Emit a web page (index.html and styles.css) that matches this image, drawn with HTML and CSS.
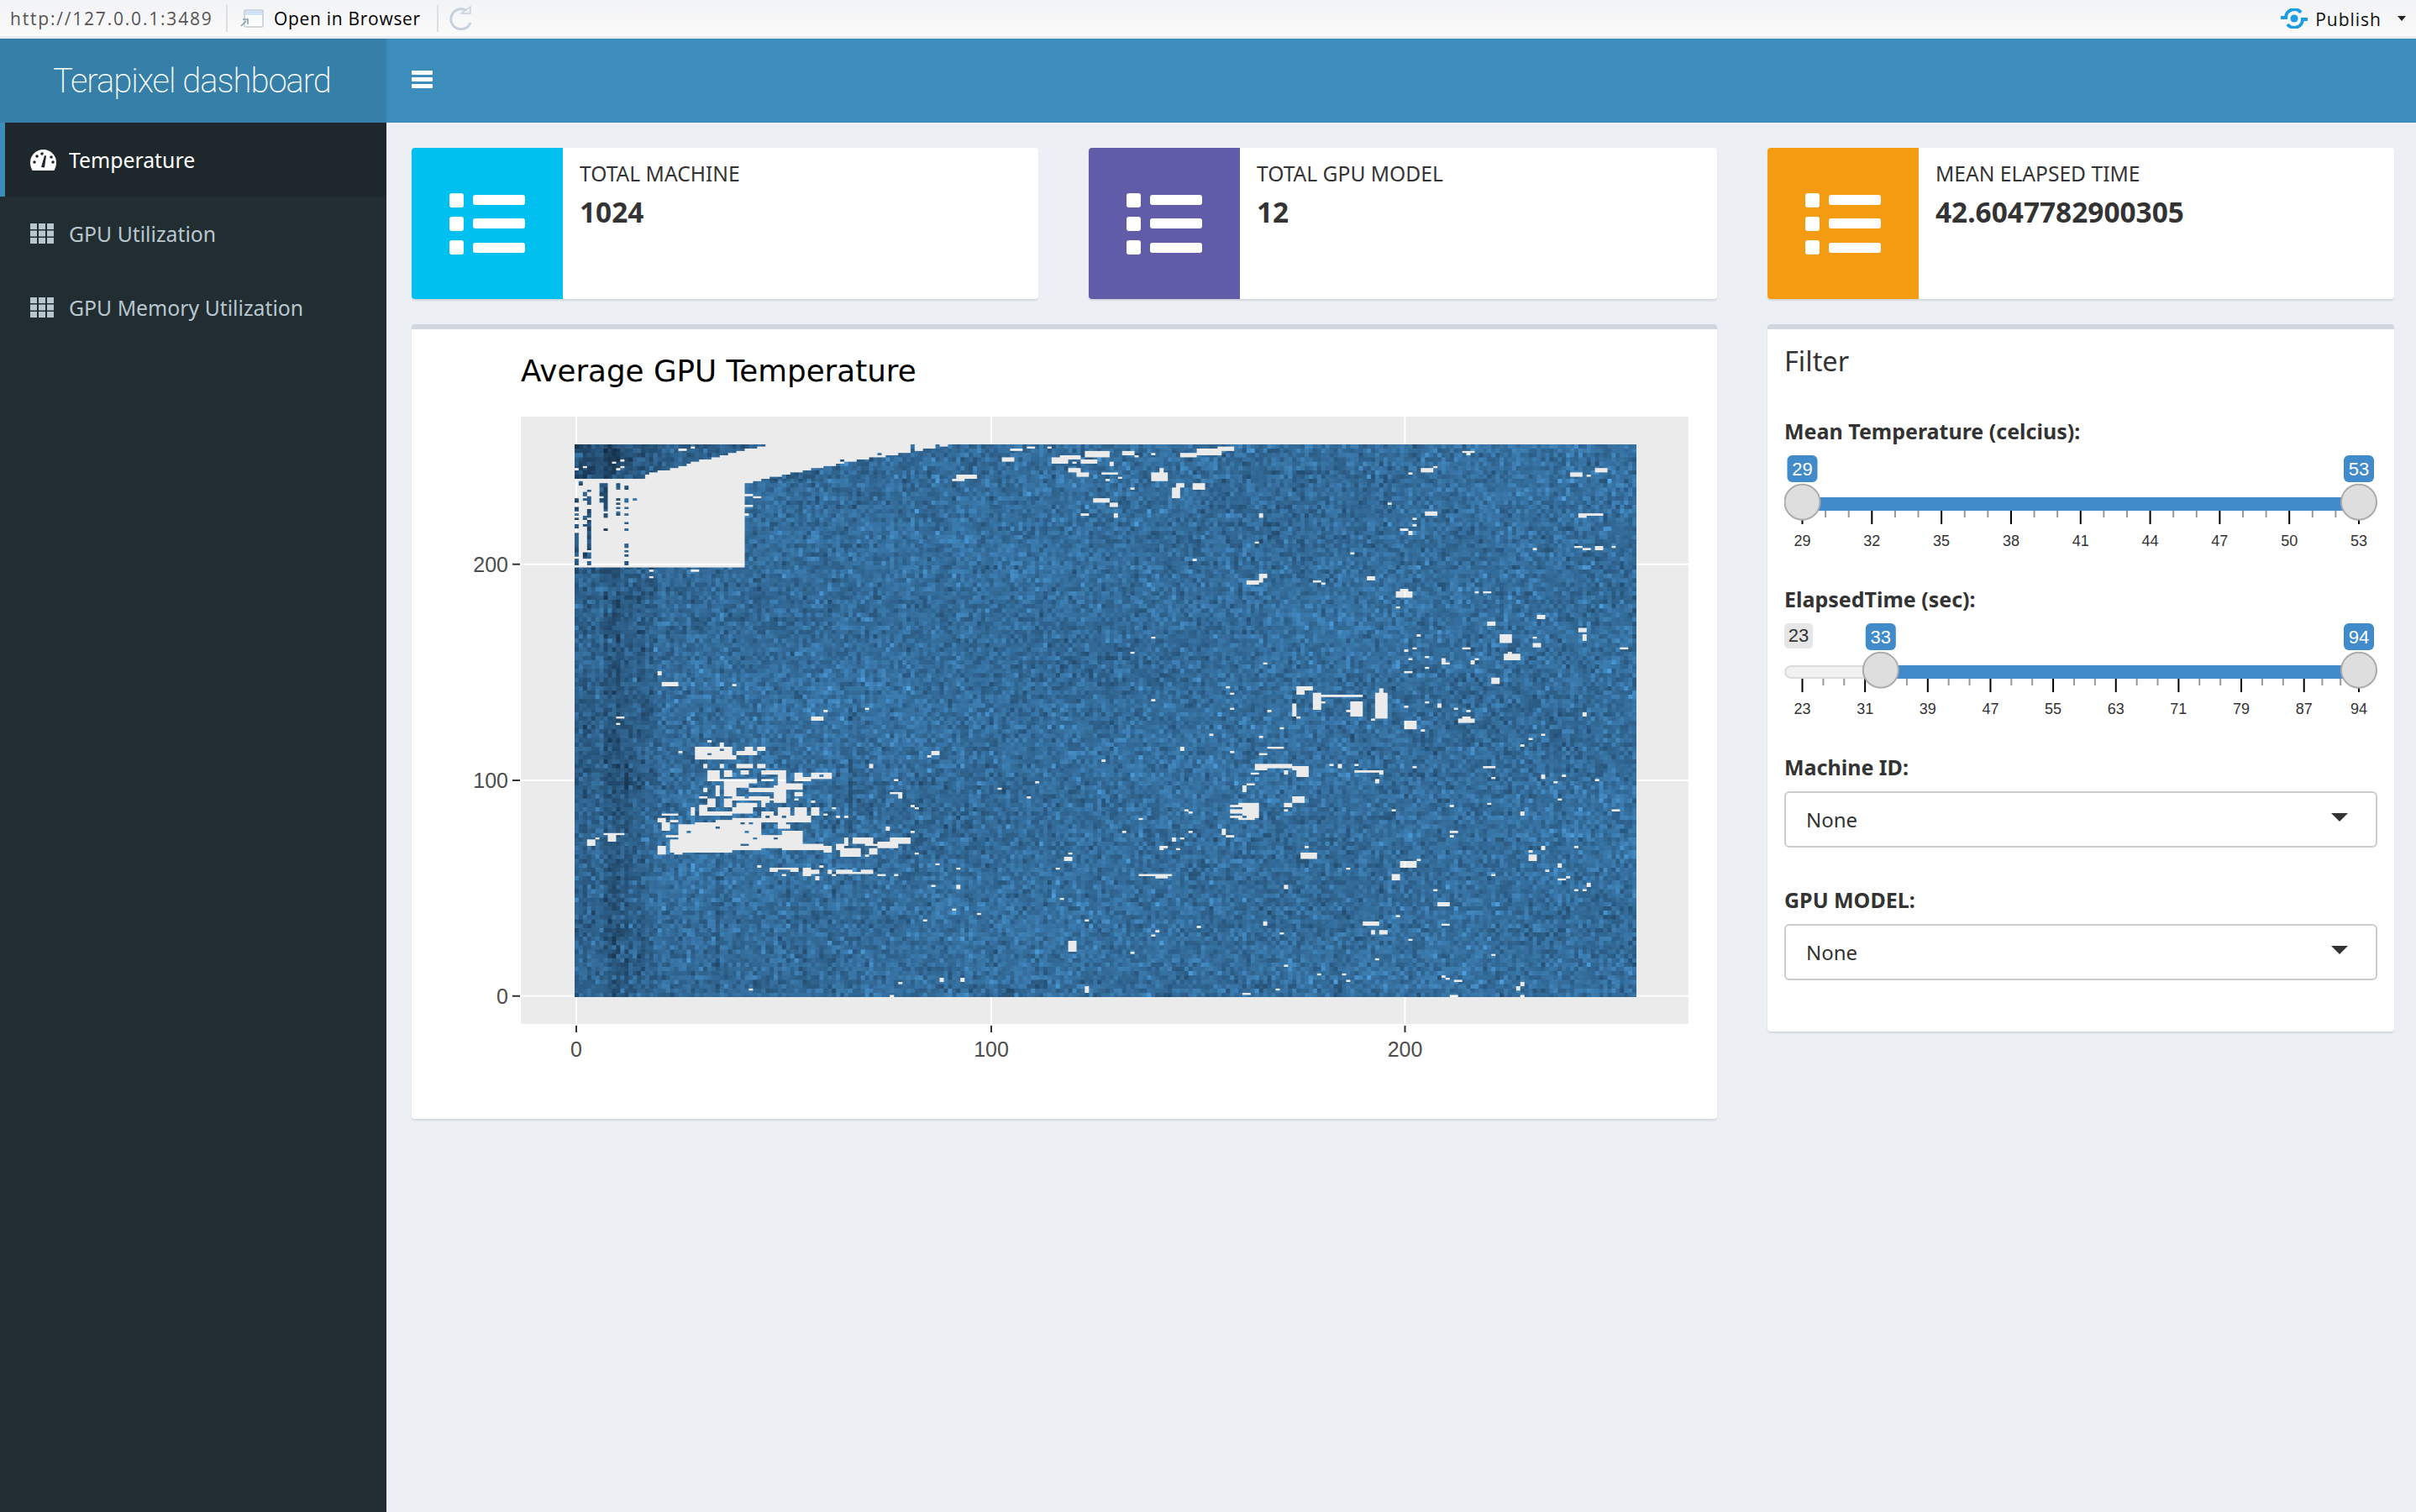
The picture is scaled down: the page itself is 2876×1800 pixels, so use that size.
FILE: index.html
```html
<!DOCTYPE html>
<html lang="en">
  <head>
    <meta charset="UTF-8" />
    <title>Terapixel dashboard</title>
    <link rel="stylesheet" href="styles.css">
  </head>
  <body>
    <div class="topbar">
      <span class="url">http://127.0.0.1:3489</span>
      <span class="divider"></span>
      <svg class="open-icon" viewBox="0 0 30 22">
        <rect x="7" y="1" width="22" height="20" rx="1" fill="#fbfcfd" stroke="#a8b4c2" />
        <rect x="8" y="2" width="20" height="5" fill="#cfe2f6" />
        <path d="M3 20l6-6M5 12h6v6" fill="none" stroke="#8c9cae" stroke-width="1.6" />
      </svg>
      <span class="open-text">Open in Browser</span>
      <span class="divider"></span>
      <svg class="reload-icon" viewBox="0 0 30 30">
        <path d="M24 8A12 12 0 1 0 26 20" fill="none" stroke="#c4d2df" stroke-width="3" />
        <path d="M15 9h11V1z" fill="#eef2f6" stroke="#c4d2df" stroke-width="1.4" />
      </svg>
      <span class="publish">
        <svg class="publish-icon" viewBox="0 0 32 24">
          <path d="M0 11H6A10 10 0 0 1 24 5" fill="none" stroke="#1b9ce4" stroke-width="4" />
          <path d="M32 13H26A10 10 0 0 1 8 19" fill="none" stroke="#1b9ce4" stroke-width="4" />
          <circle cx="16" cy="12" r="4.6" fill="#1b9ce4" />
        </svg>
        <span class="publish-text">Publish</span>
        <span class="publish-caret"></span>
      </span>
    </div>

    <div class="app">
      <aside class="sidebar">
        <div class="logo">Terapixel dashboard</div>
        <ul class="menu">
          <li class="menu-item active">
            <svg class="menu-icon" viewBox="0 0 31 25">
              <path d="M15.5 0A15.5 15.5 0 0 0 0 15.5c0 3.6 1 6.7 2.600 9.500h25.800c1.600-2.800 2.600-5.900 2.600-9.500A15.500 15.500 0 0 0 15.500 0z" fill="#fff" />
              <g fill="#1e282c">
                <circle cx="5" cy="15" r="1.800" />
                <circle cx="8" cy="8" r="1.800" />
                <circle cx="14" cy="5" r="1.800" />
                <circle cx="25" cy="9" r="1.800" />
                <circle cx="27" cy="15" r="1.800" />
                <path d="M13 21l4-14 2 .5-2 14z" />
              </g>
            </svg>
            <span>Temperature</span>
          </li>
          <li class="menu-item">
            <svg class="menu-icon th" viewBox="0 0 28 24">
              <path d="M0 0h8v7H0zM10 0h8v7h-8zM20 0h8v7h-8zM0 8.500h8v7H0zM10 8.500h8v7h-8zM20 8.500h8v7h-8zM0 17h8v7H0zM10 17h8v7h-8zM20 17h8v7h-8z" fill="#b8c7ce" />
            </svg>
            <span>GPU Utilization</span>
          </li>
          <li class="menu-item">
            <svg class="menu-icon th" viewBox="0 0 28 24">
              <path d="M0 0h8v7H0zM10 0h8v7h-8zM20 0h8v7h-8zM0 8.500h8v7H0zM10 8.500h8v7h-8zM20 8.500h8v7h-8zM0 17h8v7H0zM10 17h8v7h-8zM20 17h8v7h-8z" fill="#b8c7ce" />
            </svg>
            <span>GPU Memory Utilization</span>
          </li>
        </ul>
      </aside>

      <div class="page">
        <header class="navbar">
          <div class="burger"><span></span><span></span><span></span></div>
        </header>

        <main class="content">
          <div class="info-box">
            <div class="info-icon aqua">
              <svg class="list-icon" viewBox="0 0 90 73">
                <path d="M3 0h11a3 3 0 0 1 3 3v11a3 3 0 0 1-3 3H3a3 3 0 0 1-3-3V3a3 3 0 0 1 3-3zM3 28h11a3 3 0 0 1 3 3v11a3 3 0 0 1-3 3H3a3 3 0 0 1-3-3V31a3 3 0 0 1 3-3zM3 56h11a3 3 0 0 1 3 3v11a3 3 0 0 1-3 3H3a3 3 0 0 1-3-3V59a3 3 0 0 1 3-3z" fill="#fff" />
                <path d="M31 2h56a3 3 0 0 1 3 3v6a3 3 0 0 1-3 3H31a3 3 0 0 1-3-3V5a3 3 0 0 1 3-3zM31 30h56a3 3 0 0 1 3 3v6a3 3 0 0 1-3 3H31a3 3 0 0 1-3-3v-6a3 3 0 0 1 3-3zM31 59h56a3 3 0 0 1 3 3v6a3 3 0 0 1-3 3H31a3 3 0 0 1-3-3v-6a3 3 0 0 1 3-3z" fill="#fff" />
              </svg>
            </div>
            <div class="info-text">
              <div class="info-label">TOTAL MACHINE</div>
              <div class="info-value">1024</div>
            </div>
          </div>

          <div class="info-box">
            <div class="info-icon purple">
              <svg class="list-icon" viewBox="0 0 90 73">
                <path d="M3 0h11a3 3 0 0 1 3 3v11a3 3 0 0 1-3 3H3a3 3 0 0 1-3-3V3a3 3 0 0 1 3-3zM3 28h11a3 3 0 0 1 3 3v11a3 3 0 0 1-3 3H3a3 3 0 0 1-3-3V31a3 3 0 0 1 3-3zM3 56h11a3 3 0 0 1 3 3v11a3 3 0 0 1-3 3H3a3 3 0 0 1-3-3V59a3 3 0 0 1 3-3z" fill="#fff" />
                <path d="M31 2h56a3 3 0 0 1 3 3v6a3 3 0 0 1-3 3H31a3 3 0 0 1-3-3V5a3 3 0 0 1 3-3zM31 30h56a3 3 0 0 1 3 3v6a3 3 0 0 1-3 3H31a3 3 0 0 1-3-3v-6a3 3 0 0 1 3-3zM31 59h56a3 3 0 0 1 3 3v6a3 3 0 0 1-3 3H31a3 3 0 0 1-3-3v-6a3 3 0 0 1 3-3z" fill="#fff" />
              </svg>
            </div>
            <div class="info-text">
              <div class="info-label">TOTAL GPU MODEL</div>
              <div class="info-value">12</div>
            </div>
          </div>

          <div class="info-box">
            <div class="info-icon orange">
              <svg class="list-icon" viewBox="0 0 90 73">
                <path d="M3 0h11a3 3 0 0 1 3 3v11a3 3 0 0 1-3 3H3a3 3 0 0 1-3-3V3a3 3 0 0 1 3-3zM3 28h11a3 3 0 0 1 3 3v11a3 3 0 0 1-3 3H3a3 3 0 0 1-3-3V31a3 3 0 0 1 3-3zM3 56h11a3 3 0 0 1 3 3v11a3 3 0 0 1-3 3H3a3 3 0 0 1-3-3V59a3 3 0 0 1 3-3z" fill="#fff" />
                <path d="M31 2h56a3 3 0 0 1 3 3v6a3 3 0 0 1-3 3H31a3 3 0 0 1-3-3V5a3 3 0 0 1 3-3zM31 30h56a3 3 0 0 1 3 3v6a3 3 0 0 1-3 3H31a3 3 0 0 1-3-3v-6a3 3 0 0 1 3-3zM31 59h56a3 3 0 0 1 3 3v6a3 3 0 0 1-3 3H31a3 3 0 0 1-3-3v-6a3 3 0 0 1 3-3z" fill="#fff" />
              </svg>
            </div>
            <div class="info-text">
              <div class="info-label">MEAN ELAPSED TIME</div>
              <div class="info-value">42.6047782900305</div>
            </div>
          </div>

          <section class="box plot-box">
            <svg class="plot-axes" width="1553" height="938">
              <text class="plot-title" x="130" y="62">Average GPU Temperature</text>
              <rect x="130" y="104" width="1390" height="723" fill="#ebebeb" />
              <path d="M196 104v723M690 104v723M1182.500 104v723M130 279.700h1390M130 537h1390M130 793.700h1390" stroke="#fff" stroke-width="2" />
              <path d="M196 829v8M690 829v8M1182.500 829v8M120 279.700h9M120 537h9M120 793.700h9" stroke="#333" stroke-width="2" />
              <g class="axis-y">
                <text x="115" y="288.700">200</text>
                <text x="115" y="546">100</text>
                <text x="115" y="802.700">0</text>
              </g>
              <g class="axis-x">
                <text x="196" y="866">0</text>
                <text x="690" y="866">100</text>
                <text x="1182.500" y="866">200</text>
              </g>
            </svg>
            <canvas id="heatmap" class="heatmap" width="1024" height="1024"></canvas>
          </section>

          <section class="box filter-box">
            <h3 class="filter-title">Filter</h3>
            <label class="field-label">Mean Temperature (celcius):</label>
            <div class="slider" id="tempSlider"></div>
            <label class="field-label">ElapsedTime (sec):</label>
            <div class="slider" id="timeSlider"></div>
            <label class="field-label">Machine ID:</label>
            <div class="select"><span>None</span><span class="select-caret"></span></div>
            <label class="field-label second">GPU MODEL:</label>
            <div class="select"><span>None</span><span class="select-caret"></span></div>
          </section>
        </main>
      </div>
    </div>

    <script src="app.js"></script>
  </body>
</html>
```

FILE: styles.css
```css
* {
  box-sizing: border-box;
}

body {
  margin: 0;
  width: 2876px;
  height: 1800px;
  overflow: hidden;
  background-color: #ecf0f5;
  color: #333;
  font-family: "Noto Sans", sans-serif;
}

/* viewer toolbar */
.topbar {
  display: flex;
  align-items: center;
  height: 46px;
  padding: 0 12px;
  background: linear-gradient(#f2f3f5, #fbfbfb);
  border-bottom: 3px solid #e9ebee;
  font-family: "Open Sans", sans-serif;
  font-size: 21px;
}

.url {
  width: 257px;
  color: #555;
  letter-spacing: 1.8px;
}

.divider {
  width: 2px;
  height: 32px;
  background-color: #dcdfe3;
}

.open-icon {
  width: 30px;
  height: 22px;
  margin-left: 13px;
}

.open-text {
  width: 194px;
  margin-left: 12px;
  color: #000;
  letter-spacing: 0.7px;
}

.reload-icon {
  width: 30px;
  height: 30px;
  margin-left: 12px;
}

.publish {
  display: flex;
  align-items: center;
  margin-left: auto;
}

.publish-icon {
  width: 32px;
  height: 24px;
}

.publish-text {
  margin-left: 9px;
  margin-top: 2px;
  color: #111;
  letter-spacing: 1px;
}

.publish-caret {
  width: 0;
  height: 0;
  margin-left: 19px;
  border-left: 5px solid transparent;
  border-right: 5px solid transparent;
  border-top: 6px solid #222;
}

.app {
  display: flex;
  height: 1754px;
}

/* left menu */
.sidebar {
  width: 460px;
  background-color: #222d32;
}

.logo {
  height: 100px;
  padding-left: 63px;
  background-color: #367fa9;
  color: #fff;
  font-family: Roboto, sans-serif;
  font-size: 40px;
  font-weight: 200;
  line-height: 102px;
  letter-spacing: -1px;
}

.menu {
  list-style: none;
  margin: 0;
  padding: 0;
}

.menu-item {
  display: flex;
  align-items: center;
  height: 88px;
  padding-left: 36px;
  color: #b8c7ce;
  font-size: 24.8px;
}

.menu-item.active {
  padding-left: 30px;
  border-left: 6px solid #3c8dbc;
  background-color: #1e282c;
  color: #fff;
}

.menu-icon {
  width: 31px;
  height: 25px;
  margin-right: 15px;
}

.menu-icon.th {
  width: 28px;
  height: 24px;
  margin-right: 18px;
}

.page {
  flex: 1;
}

.navbar {
  display: flex;
  align-items: center;
  height: 100px;
  padding-left: 30px;
  background-color: #3c8dbc;
}

.burger {
  display: flex;
  flex-direction: column;
  gap: 3px;
  margin-top: -4px;
}

.burger span {
  display: block;
  width: 25px;
  height: 5px;
  border-radius: 1px;
  background-color: #fff;
}

/* main grid */
.content {
  display: grid;
  grid-template-columns: 746px 748px 746px;
  column-gap: 60px;
  row-gap: 30px;
  align-items: start;
  padding: 30px 26px 0 30px;
}

.info-box {
  display: flex;
  height: 180px;
  background-color: #fff;
  border-radius: 4px;
  box-shadow: 0 2px 2px rgba(0, 0, 0, 0.1);
}

.info-icon {
  display: flex;
  align-items: center;
  justify-content: center;
  width: 180px;
  border-radius: 4px 0 0 4px;
}

.info-icon.aqua {
  background-color: #00c0ef;
}

.info-icon.purple {
  background-color: #605ca8;
}

.info-icon.orange {
  background-color: #f39c12;
}

.list-icon {
  width: 90px;
  height: 73px;
}

.info-text {
  padding: 14px 20px;
}

.info-label {
  font-size: 24.6px;
  line-height: 34px;
}

.info-value {
  margin-top: 9px;
  font-size: 33.4px;
  font-weight: 700;
  line-height: 38px;
}

.box {
  position: relative;
  background-color: #fff;
  border-top: 6px solid #d2d6de;
  border-radius: 4px;
  box-shadow: 0 2px 2px rgba(0, 0, 0, 0.1);
}

/* plot */
.plot-box {
  grid-column: span 2;
  height: 946px;
}

.plot-axes {
  display: block;
}

.plot-title {
  font-family: "DejaVu Sans", sans-serif;
  font-size: 35.7px;
  fill: #000;
}

.axis-y text,
.axis-x text {
  font-family: "Liberation Sans", sans-serif;
  font-size: 25px;
  fill: #4d4d4d;
}

.axis-y text {
  text-anchor: end;
}

.axis-x text {
  text-anchor: middle;
}

.heatmap {
  position: absolute;
  left: 193.5px;
  top: 137px;
  width: 1264px;
  height: 658px;
}

/* filter panel */
.filter-box {
  height: 842px;
  padding: 21px 20px 0 20px;
}

.filter-title {
  margin: 0 0 49px 0;
  font-size: 32.5px;
  font-weight: 400;
  line-height: 34px;
}

.field-label {
  display: block;
  font-size: 25px;
  font-weight: 700;
  line-height: 34px;
}

.field-label.second {
  margin-top: 45px;
}

.slider {
  height: 130px;
  margin: 10px 0 26px 0;
}

.slider svg {
  display: block;
}

.slider .tip {
  font-family: "Liberation Sans", sans-serif;
  font-size: 22px;
  text-anchor: middle;
  fill: #fff;
}

.slider .tip.off {
  fill: #333;
}

.slider .grid-text {
  font-family: "Liberation Sans", sans-serif;
  font-size: 18px;
  text-anchor: middle;
  fill: #333;
}

.select {
  display: flex;
  align-items: center;
  justify-content: space-between;
  height: 67px;
  margin-top: 12px;
  padding: 0 33px 0 24px;
  border: 2px solid #ccc;
  border-radius: 6px;
  font-size: 24px;
}

.select-caret {
  width: 0;
  height: 0;
  margin-top: -6px;
  border-left: 10px solid transparent;
  border-right: 10px solid transparent;
  border-top: 10px solid #333;
}
```

FILE: app.js
```js
// Sliders, drawn as svg from their range
const SLIDER_WIDTH = 706;
const SLIDER_LEFT = 21.5;
const SLIDER_SPAN = 662.5;

function buildSlider(id, slider) {
  const pos = (v) => SLIDER_LEFT + ((v - slider.min) / (slider.max - slider.min)) * SLIDER_SPAN;
  const from = pos(slider.from);
  const to = pos(slider.to);
  let html = `<rect x="1" y="53" width="${SLIDER_WIDTH - 2}" height="14" rx="7" fill="#f0f0f0" stroke="#ddd" stroke-width="2" />`;

  slider.marks.forEach((mark, i) => {
    const x = pos(mark);
    html += `<rect x="${x - 1}" y="68" width="2" height="16" fill="#000" />`;
    html += `<text class="grid-text" x="${x}" y="110">${mark}</text>`;
    if (i < slider.marks.length - 1) {
      const step = (pos(slider.marks[i + 1]) - x) / 3;
      html += `<rect x="${x + step - 1}" y="68" width="2" height="8" fill="#999" />`;
      html += `<rect x="${x + 2 * step - 1}" y="68" width="2" height="8" fill="#999" />`;
    }
  });

  html += `<rect x="${from}" y="52" width="${to - from}" height="16" fill="#428bca" />`;
  [from, to].forEach((x) => {
    html += `<ellipse cx="${x}" cy="57.700" rx="21" ry="21" fill="#dedede" stroke="#ababab" stroke-width="2" />`;
  });

  if (slider.from > slider.min) {
    html += `<rect x="0" y="2" width="34" height="30" rx="5" fill="#e6e6e6" />`;
    html += `<text class="tip off" x="17" y="24">${slider.min}</text>`;
  }
  [[from, slider.from], [to, slider.to]].forEach(([x, value]) => {
    html += `<rect x="${x - 18}" y="2" width="36" height="32" rx="6" fill="#428bca" />`;
    html += `<text class="tip" x="${x}" y="26">${value}</text>`;
  });

  document.getElementById(id).innerHTML = `<svg width="${SLIDER_WIDTH}" height="130">${html}</svg>`;
}

buildSlider("tempSlider", {
  min: 29, max: 53, from: 29, to: 53,
  marks: [29, 32, 35, 38, 41, 44, 47, 50, 53],
});

buildSlider("timeSlider", {
  min: 23, max: 94, from: 33, to: 94,
  marks: [23, 31, 39, 47, 55, 63, 71, 79, 87, 94],
});

// Heatmap: 256 x 256 tiles, empty tiles stay transparent
const TILE_W = 1264 / 256;
const TILE_H = 658 / 256;
const MAP_X = 683.5;
const MAP_Y = 529;
const empty = new Uint8Array(256 * 256);

function mulberry(seed) {
  return function () {
    seed = (seed + 0x6d2b79f5) | 0;
    let t = Math.imul(seed ^ (seed >>> 15), 1 | seed);
    t = (t + Math.imul(t ^ (t >>> 7), 61 | t)) ^ t;
    return ((t ^ (t >>> 14)) >>> 0) / 4294967296;
  };
}

// Spots are [x1, y1, x2, y2] in a region scaled by sx, sy from page point ox, oy
function setSpots(region, value) {
  region.spots.forEach(([x1, y1, x2, y2]) => {
    const c1 = Math.round((region.ox + x1 / region.sx - MAP_X) / TILE_W);
    const c2 = Math.round((region.ox + x2 / region.sx - MAP_X) / TILE_W);
    const r1 = Math.round((region.oy + y1 / region.sy - MAP_Y) / TILE_H);
    const r2 = Math.round((region.oy + y2 / region.sy - MAP_Y) / TILE_H);
    for (let r = r1; r < Math.max(r2, r1 + 1); r++) {
      for (let c = c1; c < Math.max(c2, c1 + 1); c++) {
        if (r >= 0 && r < 256 && c >= 0 && c < 256) empty[r * 256 + c] = value;
      }
    }
  });
}

function inPolygon(points, x, y) {
  let inside = false;
  for (let i = 0, j = points.length - 1; i < points.length; j = i++) {
    const [xi, yi] = points[i];
    const [xj, yj] = points[j];
    if (yi > y !== yj > y && x < ((xj - xi) * (y - yi)) / (yj - yi) + xi) inside = !inside;
  }
  return inside;
}

// The large empty area at the top left
const topLeft = [
  [0, 138], [250, 138], [255, 120], [340, 100], [450, 70], [600, 35], [697, 12], [1350, 12],
  [1200, 40], [1010, 70], [850, 100], [730, 125], [607, 155], [607, 448], [0, 448],
];
for (let r = 0; r < 256; r++) {
  for (let c = 0; c < 256; c++) {
    const x = (MAP_X + (c + 0.5) * TILE_W - 683) * 3;
    const y = (MAP_Y + (r + 0.5) * TILE_H - 525) * 3;
    if (inPolygon(topLeft, x, y)) empty[r * 256 + c] = 1;
  }
}

setSpots({ ox: 683, oy: 525, sx: 3, sy: 3, spots: [
  [372, 30, 402, 36], [415, 18, 435, 30], [132, 72, 150, 84], [162, 66, 182, 72], [30, 90, 42, 96],
  [0, 96, 12, 102], [150, 96, 162, 102], [162, 90, 182, 96], [262, 460, 284, 468], [264, 480, 284, 492],
  [415, 460, 445, 468], [1362, 120, 1435, 135], [1350, 135, 1395, 145], [1530, 60, 1545, 66],
  [610, 190, 635, 196], [640, 196, 665, 206], [605, 225, 635, 232], [605, 255, 625, 262],
  [595, 383, 607, 388], [595, 413, 607, 418],
] }, 1);

// Tiles that do hold a value inside the empty area
setSpots({ ox: 683, oy: 525, sx: 3, sy: 3, spots: [
  [12, 144, 30, 156], [90, 150, 120, 195], [90, 208, 120, 222], [102, 195, 120, 250], [102, 258, 120, 276],
  [102, 312, 120, 318], [150, 150, 162, 172], [150, 204, 162, 210], [150, 222, 162, 228], [150, 234, 162, 246],
  [150, 252, 162, 264], [180, 156, 192, 172], [180, 204, 192, 222], [180, 234, 192, 246], [180, 258, 192, 264],
  [180, 288, 192, 300], [180, 312, 192, 318], [180, 366, 192, 384], [180, 390, 192, 396], [180, 408, 192, 414],
  [180, 426, 192, 444], [210, 204, 222, 210], [30, 180, 42, 198], [42, 174, 60, 180], [42, 198, 60, 228],
  [30, 204, 42, 210], [42, 246, 60, 276], [30, 264, 42, 282], [42, 282, 60, 388], [30, 300, 42, 306],
  [30, 396, 60, 420], [42, 426, 60, 444], [0, 204, 12, 222], [0, 234, 12, 252], [0, 258, 12, 264],
  [0, 276, 12, 282], [0, 300, 12, 312], [0, 330, 12, 414], [0, 420, 12, 444], [1205, 15, 1215, 35],
  [1290, 12, 1305, 18], [950, 65, 962, 70], [980, 70, 992, 84], [850, 95, 860, 100], [1080, 40, 1100, 46],
] }, 0);

setSpots({ ox: 1180, oy: 525, sx: 2.01, sy: 3, spots: [
  [82, 18, 105, 30], [132, 18, 145, 30], [42, 28, 75, 35], [25, 60, 55, 72], [145, 62, 185, 82], [165, 50, 210, 65],
  [225, 35, 280, 60], [185, 95, 215, 115], [205, 115, 230, 125], [315, 35, 345, 48], [340, 48, 352, 60],
  [380, 40, 392, 48], [260, 115, 300, 122], [300, 125, 312, 138], [275, 135, 285, 145], [280, 75, 290, 88],
  [190, 70, 205, 85], [215, 65, 250, 80], [380, 112, 420, 142], [400, 100, 410, 112], [450, 45, 490, 60],
  [490, 30, 550, 47], [545, 18, 578, 32], [480, 152, 510, 172], [430, 165, 450, 202], [445, 150, 460, 165],
  [245, 205, 280, 220], [280, 220, 300, 232], [210, 258, 232, 264], [292, 262, 300, 275], [640, 262, 650, 275],
  [630, 360, 638, 368], [480, 420, 490, 425], [860, 395, 866, 408], [1125, 32, 1155, 42], [1135, 42, 1145, 48],
  [1025, 100, 1055, 114], [995, 112, 1008, 120], [1055, 90, 1064, 96], [1385, 116, 1415, 124], [1445, 98, 1475, 114],
  [1425, 120, 1435, 126], [1038, 248, 1062, 264], [1008, 275, 1016, 282], [1008, 298, 1016, 305], [980, 312, 995, 318],
  [995, 320, 1008, 335], [950, 222, 956, 228], [1404, 262, 1422, 274], [1422, 258, 1462, 264], [1395, 372, 1415, 384],
  [1415, 384, 1435, 390], [1445, 372, 1460, 388], [1484, 372, 1490, 385], [1295, 384, 1306, 388], [610, 500, 635, 515],
  [635, 490, 645, 502], [640, 475, 658, 492], [770, 497, 790, 503], [788, 503, 798, 515], [896, 480, 916, 497],
  [970, 540, 1008, 557], [980, 532, 998, 540], [968, 587, 976, 600], [1158, 533, 1164, 545], [1178, 533, 1194, 545],
  [1306, 625, 1325, 635], [1185, 642, 1205, 658], [1215, 690, 1245, 718], [1295, 697, 1305, 708], [1295, 720, 1310, 738],
  [1402, 665, 1420, 685], [1416, 690, 1422, 712], [1504, 738, 1525, 745], [1124, 738, 1144, 748], [1225, 760, 1265, 785],
  [1235, 750, 1245, 760], [988, 742, 998, 748], [1008, 738, 1016, 744], [998, 772, 1008, 785], [1036, 768, 1044, 775],
  [1078, 772, 1085, 800], [1085, 792, 1097, 800], [1150, 782, 1158, 795], [1158, 772, 1165, 785], [1036, 803, 1044, 815],
  [990, 818, 1008, 826], [1195, 848, 1215, 868], [645, 790, 658, 800], [1018, 690, 1024, 695], [385, 695, 394, 708],
  [334, 750, 342, 762], [334, 168, 340, 175], [558, 875, 570, 880], [572, 898, 578, 905], [380, 924, 392, 930],
  [572, 955, 578, 960], [660, 960, 670, 966],
] }, 1);

setSpots({ ox: 1180, oy: 760, sx: 2.01, sy: 3, spots: [
  [727, 172, 765, 185], [727, 185, 745, 200], [768, 195, 788, 255], [788, 225, 798, 235], [788, 198, 890, 205],
  [860, 225, 888, 275], [848, 255, 860, 260], [918, 190, 948, 285], [928, 178, 938, 190], [908, 285, 920, 295],
  [720, 232, 726, 275], [726, 275, 740, 285], [990, 295, 1015, 325], [1025, 325, 1035, 332], [990, 243, 996, 248],
  [1036, 225, 1044, 232], [1065, 232, 1076, 248], [1105, 248, 1118, 255], [1116, 285, 1158, 300], [1138, 255, 1145, 262],
  [1130, 275, 1145, 285], [1415, 260, 1422, 278], [690, 315, 700, 326], [522, 338, 530, 350], [640, 350, 650, 356],
  [660, 384, 698, 392], [638, 410, 658, 416], [450, 390, 462, 405], [572, 405, 578, 410], [260, 435, 272, 440],
  [632, 448, 660, 472], [618, 478, 640, 488], [660, 448, 720, 460], [720, 458, 755, 470], [725, 470, 758, 492],
  [700, 470, 712, 488], [806, 448, 820, 458], [826, 448, 840, 464], [866, 448, 874, 458], [866, 470, 935, 478],
  [928, 478, 936, 488], [916, 500, 928, 516], [1288, 352, 1294, 356], [1314, 338, 1328, 350], [1265, 380, 1274, 385],
  [1178, 458, 1205, 465], [1192, 492, 1205, 500], [1315, 488, 1326, 500], [1362, 490, 1375, 494], [1342, 512, 1355, 518],
  [1442, 500, 1455, 512], [1008, 458, 1016, 465], [105, 512, 112, 518], [14, 530, 22, 542], [82, 566, 90, 572],
  [600, 525, 612, 545], [612, 520, 628, 528], [698, 590, 720, 600], [720, 565, 745, 590], [695, 610, 700, 620],
  [575, 585, 635, 640], [590, 640, 630, 650], [958, 608, 968, 620], [1098, 597, 1105, 602], [1185, 585, 1192, 597],
  [1265, 620, 1274, 625], [1485, 608, 1505, 620], [1355, 572, 1362, 578], [465, 608, 470, 618], [470, 620, 480, 625],
  [355, 640, 362, 650],
] }, 1);

setSpots({ ox: 1180, oy: 760, sx: 2.01, sy: 3, spots: [
  [575, 605, 600, 612], [575, 624, 600, 630], [600, 632, 612, 640], [575, 585, 590, 592],
] }, 0);

setSpots({ ox: 1180, oy: 960, sx: 2.01, sy: 3, spots: [
  [550, 80, 562, 100], [560, 100, 578, 110], [470, 88, 482, 92], [315, 88, 322, 92], [430, 110, 442, 128],
  [450, 112, 460, 116], [404, 145, 412, 158], [412, 140, 420, 146], [440, 148, 448, 158], [170, 182, 192, 195],
  [185, 165, 192, 170], [155, 218, 165, 225], [352, 243, 395, 248], [395, 245, 420, 255], [420, 242, 430, 246],
  [165, 325, 172, 332], [225, 405, 232, 410], [396, 442, 402, 452], [380, 460, 392, 465], [490, 428, 502, 434],
  [650, 410, 658, 428], [692, 452, 700, 458], [184, 482, 204, 518], [334, 518, 342, 525], [226, 645, 232, 668],
  [600, 668, 618, 675], [680, 650, 690, 656], [700, 280, 712, 296], [748, 140, 758, 146], [740, 168, 778, 190],
  [850, 218, 858, 224], [978, 198, 1018, 218], [1015, 190, 1024, 198], [955, 238, 975, 265], [1058, 292, 1064, 296],
  [1065, 345, 1096, 356], [968, 388, 976, 398], [890, 410, 928, 430], [908, 440, 916, 458], [928, 442, 946, 458],
  [1076, 416, 1098, 428], [996, 472, 1008, 482], [1195, 525, 1205, 536], [916, 542, 928, 548], [700, 568, 710, 572],
  [780, 597, 786, 603], [840, 597, 846, 603], [848, 620, 858, 626], [1078, 603, 1086, 615], [1086, 615, 1096, 622],
  [1106, 620, 1124, 626], [1265, 628, 1274, 645], [1255, 645, 1266, 656], [1098, 672, 1116, 680], [1265, 675, 1274, 680],
  [1100, 88, 1118, 92], [1098, 105, 1105, 110], [1310, 142, 1326, 158], [1288, 158, 1294, 162], [1288, 172, 1305, 192],
  [1395, 140, 1402, 146], [1355, 200, 1362, 218], [1326, 225, 1334, 236], [1356, 255, 1376, 265], [1376, 250, 1382, 255],
  [1195, 238, 1205, 242], [1422, 275, 1436, 290], [1395, 292, 1402, 296], [1416, 292, 1422, 296], [1268, 22, 1274, 26],
] }, 1);

// The big cluster left of the middle
setSpots({ ox: 760, oy: 870, sx: 3, sy: 3, spots: [
  [205, 55, 335, 105], [245, 30, 255, 38], [285, 40, 305, 55], [335, 85, 345, 105], [350, 75, 420, 90], [380, 60, 405, 75],
  [425, 60, 455, 75], [140, 72, 155, 80], [235, 118, 245, 135], [285, 118, 305, 130], [345, 118, 405, 130], [425, 118, 455, 130],
  [245, 145, 290, 180], [310, 145, 340, 165], [360, 145, 400, 155], [430, 145, 490, 160], [495, 140, 530, 200], [555, 150, 590, 180],
  [610, 148, 690, 175], [590, 165, 610, 180], [255, 170, 300, 180], [300, 175, 420, 185], [430, 170, 480, 180], [235, 200, 250, 220],
  [270, 195, 285, 235], [305, 185, 345, 235], [350, 190, 390, 200], [400, 205, 480, 215], [480, 195, 530, 255], [530, 190, 590, 210],
  [555, 215, 585, 235], [215, 235, 240, 245], [245, 245, 275, 270], [300, 240, 330, 270], [340, 235, 480, 250], [345, 260, 420, 270],
  [430, 240, 470, 270], [560, 240, 570, 250], [185, 270, 200, 305], [215, 265, 245, 300], [250, 285, 330, 300], [335, 275, 410, 295],
  [430, 285, 480, 300], [495, 270, 540, 350], [560, 270, 600, 300], [620, 275, 645, 300], [620, 250, 630, 255], [690, 270, 700, 278],
  [660, 295, 675, 300], [700, 303, 720, 308], [730, 303, 750, 308], [65, 310, 100, 325], [85, 295, 140, 305], [110, 320, 140, 330],
  [85, 330, 110, 355], [140, 335, 200, 435], [200, 330, 280, 435], [280, 320, 340, 435], [340, 310, 430, 430], [430, 370, 510, 420],
  [510, 360, 585, 430], [440, 300, 490, 325], [545, 300, 620, 330], [100, 375, 140, 380], [110, 385, 140, 435], [65, 410, 95, 440],
  [125, 420, 155, 440], [590, 405, 640, 430], [640, 400, 660, 430], [660, 415, 690, 435], [700, 400, 740, 430], [720, 420, 790, 450],
  [735, 380, 755, 410], [760, 380, 830, 405], [800, 405, 880, 415], [815, 420, 850, 440], [850, 395, 920, 420], [900, 380, 970, 400],
  [990, 435, 1000, 440], [885, 345, 898, 350], [970, 355, 982, 362], [808, 440, 820, 450], [425, 483, 440, 488], [465, 485, 497, 505],
  [500, 488, 570, 495], [540, 495, 570, 505], [510, 508, 525, 512], [585, 490, 620, 520], [620, 498, 650, 512], [630, 520, 650, 535],
  [650, 483, 660, 488], [680, 495, 688, 510], [700, 495, 760, 510], [760, 500, 790, 512], [790, 495, 840, 508], [850, 512, 880, 518],
  [910, 508, 930, 513], [688, 515, 700, 522], [1045, 75, 1072, 85], [1032, 85, 1042, 90], [820, 115, 838, 130], [910, 170, 928, 182],
  [1282, 200, 1294, 212], [900, 218, 940, 225], [928, 225, 940, 238], [970, 266, 985, 272], [985, 272, 1000, 278], [1060, 470, 1072, 482],
  [1135, 488, 1150, 494], [1042, 548, 1060, 560], [1132, 548, 1150, 560],
] }, 1);

setSpots({ ox: 760, oy: 870, sx: 3, sy: 3, spots: [
  [170, 355, 185, 365], [275, 345, 285, 352], [365, 325, 378, 332], [395, 325, 408, 332], [375, 355, 395, 362],
  [365, 405, 400, 412], [405, 380, 420, 388], [480, 380, 495, 388], [480, 360, 495, 365], [440, 335, 470, 345],
  [245, 80, 260, 88], [290, 65, 305, 75], [650, 158, 662, 165], [290, 155, 305, 175], [340, 150, 360, 170],
  [400, 150, 430, 170], [450, 155, 470, 165], [530, 150, 555, 185], [470, 215, 480, 240], [380, 235, 395, 245],
  [450, 255, 470, 275], [510, 300, 530, 310], [520, 325, 540, 335], [455, 300, 470, 312],
] }, 0);

setSpots({ ox: 500, oy: 800, sx: 2.24, sy: 2.904, spots: [
  [487, 555, 545, 565], [505, 565, 525, 590], [442, 578, 462, 600], [462, 572, 478, 578], [522, 152, 546, 160],
  [524, 178, 534, 184], [1042, 152, 1072, 170], [1072, 130, 1088, 136], [645, 35, 690, 48], [630, 0, 645, 15],
  [830, 42, 840, 48], [1190, 125, 1195, 130], [692, 275, 698, 282], [875, 1095, 885, 1100], [1255, 1118, 1262, 1122],
  [1275, 1070, 1285, 1078], [1385, 1060, 1398, 1068], [1442, 1060, 1450, 1068], [1340, 857, 1352, 862], [1485, 832, 1495, 840],
  [1420, 818, 1428, 828], [1362, 735, 1372, 745], [1428, 735, 1442, 748], [1430, 678, 1440, 682], [1375, 660, 1382, 670],
  [1318, 625, 1330, 630], [1306, 548, 1316, 555], [1240, 538, 1252, 542],
] }, 1);

function drawHeatmap() {
  const tiles = document.createElement("canvas");
  tiles.width = 256;
  tiles.height = 256;
  const tileCtx = tiles.getContext("2d");
  const image = tileCtx.createImageData(256, 256);
  const rand = mulberry(4242);
  const low = [19, 43, 67];
  const high = [86, 177, 247];

  // cooler machines down the left side, each column a bit different
  const columnShift = [];
  for (let c = 0; c < 256; c++) {
    columnShift.push(c < 20 ? -0.03 - rand() * 0.1 : 0);
  }
  for (let c = 7; c <= 10; c++) columnShift[c] -= 0.1;

  // neighbouring rows run close in temperature, so draw one value per pair of rows
  const pairs = [];
  for (let i = 0; i < 128 * 256; i++) {
    let v = (rand() + rand() + rand() - 1.5) * 0.17;
    if (rand() < 0.06) v += 0.15;
    pairs.push(v);
  }

  for (let r = 0; r < 256; r++) {
    for (let c = 0; c < 256; c++) {
      let t = 0.49 + pairs[(r >> 1) * 256 + c] + (rand() - 0.5) * 0.05;
      t += 0.015 * Math.sin(c / 17 + r / 29) + 0.015 * Math.sin(r / 13 - c / 41);
      t += columnShift[c];

      if (r < 17 && c < 60) t -= 0.1;
      if (c === 12 && r > 145) t -= 0.14;
      if (c === 34 && r > 190) t -= 0.12;
      if (c === 66 && r > 125 && r < 180) t -= 0.1;
      if (r < 60 && c < 10) t -= 0.08;

      t = Math.max(0, Math.min(1, t));
      const i = (r * 256 + c) * 4;
      image.data[i] = low[0] + (high[0] - low[0]) * t;
      image.data[i + 1] = low[1] + (high[1] - low[1]) * t;
      image.data[i + 2] = low[2] + (high[2] - low[2]) * t;
      image.data[i + 3] = empty[r * 256 + c] ? 0 : 255;
    }
  }
  tileCtx.putImageData(image, 0, 0);

  // blow the tiles up so the browser only softens their edges a little
  const ctx = document.getElementById("heatmap").getContext("2d");
  ctx.imageSmoothingEnabled = false;
  ctx.drawImage(tiles, 0, 0, 1024, 1024);
}

drawHeatmap();
```
